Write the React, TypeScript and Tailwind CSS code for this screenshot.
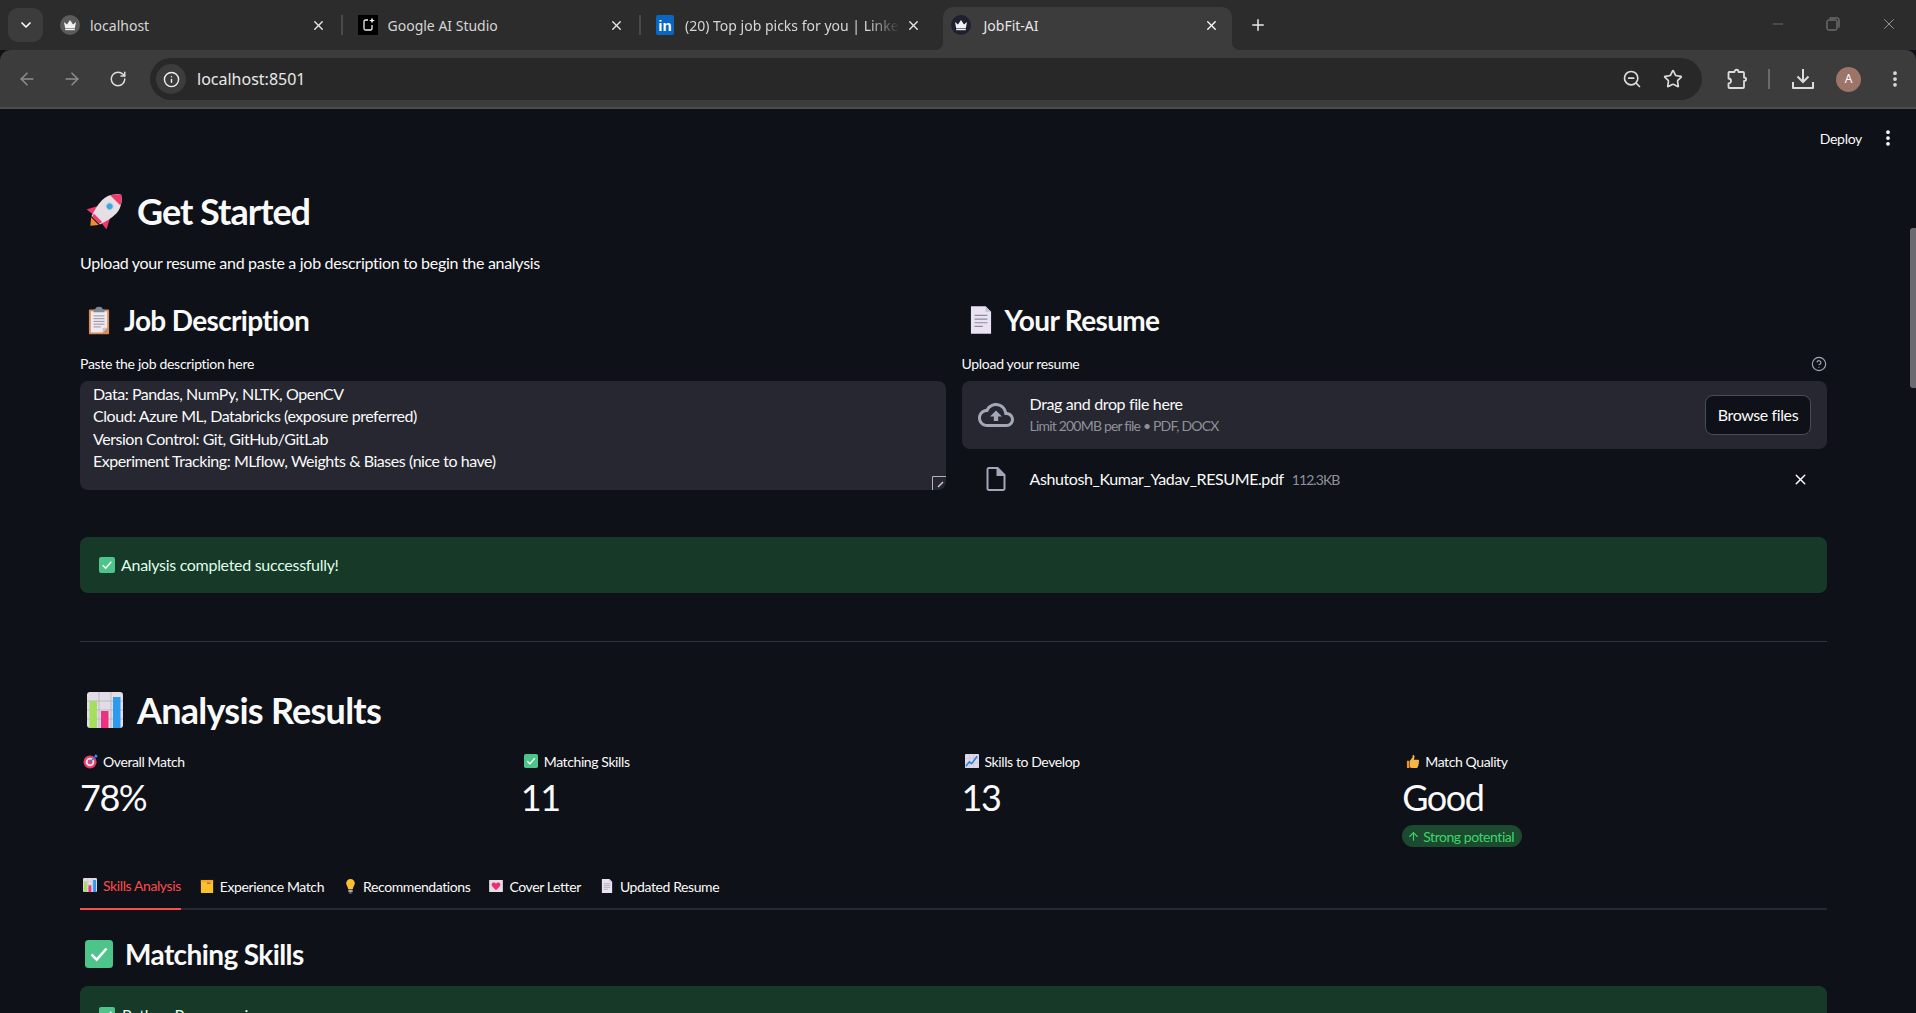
import React from 'react';
import {
  ArrowLeft,
  ArrowRight,
  ChevronDown,
  EllipsisVertical,
  Info,
  Minus,
  Plus,
  RotateCw,
  Star,
  X,
  ZoomOut,
  CircleHelp,
  ArrowUp,
} from 'lucide-react';

type IconProps = { className?: string };

const Crown = ({ bg }: { bg: string }) => (
  <svg viewBox="0 0 20 20" className="h-[20px] w-[20px] shrink-0">
    <circle cx="10" cy="10" r="10" fill={bg} />
    <path d="M4 7l3 2.6L10 5l3 4.6L16 7l-1.2 6.2H5.2z" fill="#f2f2f2" />
    <rect x="5.2" y="13.8" width="9.6" height="1.4" fill="#f2f2f2" />
  </svg>
);

const AiStudioIcon = () => (
  <svg viewBox="0 0 20 20" className="h-[20px] w-[20px] shrink-0">
    <rect width="20" height="20" fill="#000" />
    <path d="M10 5H7.5A1.5 1.5 0 0 0 6 6.5v7A1.5 1.5 0 0 0 7.5 15h5a1.5 1.5 0 0 0 1.5-1.5V10" fill="none" stroke="#eee" strokeWidth="1.3" />
    <path d="M14 2.5l.8 2.2 2.2.8-2.2.8-.8 2.2-.8-2.2-2.2-.8 2.2-.8z" fill="#fff" />
  </svg>
);

const RocketEmoji = ({ className }: IconProps) => (
  <svg viewBox="1.5 1.5 33 33" className={className}>
    <g transform="rotate(45 18 18)">
      <path d="M13 31l5 6 5-6z" fill="#f28a2e" />
      <path d="M11 18L5 29l8-1zM25 18l6 11-8-1z" fill="#f0386b" />
      <path d="M18-3c6 4 9 10 9 16 0 6-2 12-3.500 17h-11C11 25 9 19 9 13 9 7 12 1 18-3z" fill="#e6dfe4" />
      <path d="M18-3c3 2 5 4.500 6.500 7.500h-13C13 1.500 15-1 18-3z" fill="#f0386b" />
      <path d="M13.500 30h9l.8-3H12.700z" fill="#f0386b" />
      <circle cx="18" cy="12" r="3.8" fill="#c9d4de" />
      <circle cx="18" cy="12" r="2.7" fill="#3ea6e8" />
    </g>
  </svg>
);

const ClipboardEmoji = ({ className }: IconProps) => (
  <svg viewBox="0 0 24 30" className={className}>
    <rect x="1" y="3" width="22" height="27" rx="1" fill="#d98a55" />
    <path d="M3 5h18v18l-5 5H3z" fill="#eeeaf0" />
    <path d="M16 28l5-5h-5z" fill="#c9c2cc" />
    <path d="M8 3a4 3 0 0 1 8 0h2v3H6V3z" fill="#7e8a94" />
    <path d="M6 10h12M6 13h12M6 16h12M6 19h12M6 22h8" stroke="#8f8a94" strokeWidth="1" />
  </svg>
);

const PageEmoji = ({ className }: IconProps) => (
  <svg viewBox="0 0 24 30" className={className}>
    <path d="M1 0h16l6 6v24H1z" fill="#e9e2f2" />
    <path d="M17 0l6 6h-6z" fill="#c5bdd0" />
    <path d="M5 10h14M5 14h14M5 18h14M5 22h9" stroke="#8f8a9c" strokeWidth="1.2" />
  </svg>
);

const CheckEmoji = ({ className }: IconProps) => (
  <svg viewBox="0 0 28 28" className={className}>
    <rect width="28" height="28" rx="3.5" fill="#4cc48a" />
    <path d="M6.5 14.5l5.2 5.200L21.500 8.500" fill="none" stroke="#fff" strokeWidth="2.6" />
  </svg>
);

const BarsEmoji = ({ className }: IconProps) => (
  <svg viewBox="0 0 36 36" className={className}>
    <rect width="36" height="36" rx="3" fill="#e1dce6" />
    <path d="M12 0v36M24 0v36M0 9h36M0 18h36M0 27h36" stroke="#bdb8c4" strokeWidth="1" />
    <rect x="2.5" y="9" width="7.5" height="27" fill="#a4e05c" />
    <rect x="14" y="19" width="7.5" height="17" fill="#ef2f80" />
    <rect x="26" y="5" width="7.5" height="31" fill="#2a9bf0" />
  </svg>
);

const TargetEmoji = ({ className }: IconProps) => (
  <svg viewBox="0 0 16 16" className={className}>
    <circle cx="7.5" cy="8.5" r="7" fill="#ef3a6e" />
    <circle cx="7.5" cy="8.5" r="4.6" fill="#f3e6ea" />
    <circle cx="7.5" cy="8.5" r="2.6" fill="#ef3a6e" />
    <path d="M7.5 8.5L14 2" stroke="#2f7fd6" strokeWidth="1.5" />
    <path d="M12 2l2-2 .5 1.500L16 2l-2 2z" fill="#2f9bf0" />
  </svg>
);

const TrendEmoji = ({ className }: IconProps) => (
  <svg viewBox="0 0 16 16" className={className}>
    <rect width="16" height="16" rx="1" fill="#ded8e8" />
    <path d="M5 0v16M10 0v16M0 5h16M0 10h16" stroke="#c4bed0" strokeWidth="0.6" />
    <path d="M1 14l4-5 2.500 2L14 2.500" fill="none" stroke="#1f7fe0" strokeWidth="1.7" />
  </svg>
);

const ThumbEmoji = ({ className }: IconProps) => (
  <svg viewBox="0 0 16 16" className={className}>
    <path d="M1 7h3v8.500H2a1 1 0 0 1-1-1z" fill="#f28f2c" />
    <path d="M4.500 7.200L7.500 3V1c0-.8 2.300-1 2.300 1.400L9 6h4.600c1.800 0 1.800 2.400.6 2.700 1 .6.800 2.200-.2 2.500.6.800.3 2.100-.6 2.400.2 1-.5 1.900-1.400 1.900H6.500l-2-.8z" fill="#f9b544" />
  </svg>
);

const NotebookEmoji = ({ className }: IconProps) => (
  <svg viewBox="0 0 16 16" className={className}>
    <rect x="1" y="1" width="14" height="14.5" rx="1" fill="#fbc02d" />
    <rect x="1" y="0.5" width="14" height="2.5" fill="#f5a623" />
    <rect x="8" y="3.5" width="4" height="1.5" fill="#e0483e" />
  </svg>
);

const BulbEmoji = ({ className }: IconProps) => (
  <svg viewBox="0 0 12 18" className={className}>
    <path d="M6 0a5.200 5.200 0 0 1 5.200 5.200c0 2.400-1.900 3.600-2.400 6.800H3.200C2.700 8.800.8 7.600.8 5.200A5.200 5.200 0 0 1 6 0z" fill="#fbc02d" />
    <rect x="3.4" y="12.5" width="5.2" height="3.5" rx="0.8" fill="#a9a4ae" />
    <rect x="4.5" y="16" width="3" height="1.6" rx="0.7" fill="#6f6a76" />
  </svg>
);

const LetterEmoji = ({ className }: IconProps) => (
  <svg viewBox="0 0 16 14" className={className}>
    <rect width="16" height="14" fill="#e6dcea" />
    <path d="M8 12L3.500 7.300C2 5.500 3.400 3 5.500 3 6.700 3 7.600 3.700 8 4.500 8.400 3.700 9.300 3 10.500 3c2.100 0 3.500 2.500 2 4.300z" fill="#ee2f6c" />
  </svg>
);

const CloudUpload = ({ className }: IconProps) => (
  <svg viewBox="0 0 24 24" fill="currentColor" className={className}>
    <path d="M19.35 10.04C18.67 6.59 15.64 4 12 4 9.110 4 6.600 5.640 5.350 8.040 2.340 8.360 0 10.910 0 14c0 3.310 2.690 6 6 6h13c2.760 0 5-2.240 5-5 0-2.640-2.050-4.780-4.650-4.960zM19 18H6c-2.210 0-4-1.790-4-4 0-2.050 1.530-3.760 3.560-3.970l1.070-.11.5-.95C8.080 7.140 9.940 6 12 6c2.620 0 4.880 1.860 5.390 4.430l.3 1.500 1.530.11c1.560.1 2.780 1.410 2.780 2.960 0 1.650-1.350 3-3 3zM8 13h2.550v3h2.900v-3H16l-4-4z" />
  </svg>
);

const FileIcon = ({ className }: IconProps) => (
  <svg viewBox="0 0 20 24" fill="currentColor" className={className}>
    <path d="M12 0H3C1.500 0 .5 1 .5 2.500v19C.5 23 1.500 24 3 24h14c1.500 0 2.500-1 2.500-2.500V7.500zM2.500 22V2h8v7h7v13z" />
  </svg>
);

const ExtensionIcon = () => (
  <svg viewBox="0 0 22 22" className="h-[22px] w-[22px]" fill="none" stroke="#dcdcdc" strokeWidth="1.8" strokeLinejoin="round">
    <path d="M3 4h5.500c0-3 4-3 4 0H17a1 1 0 0 1 1 1v4.500c2.800 0 2.800 3.500 0 3.500v6a1 1 0 0 1-1 1H3.500a1 1 0 0 1-1-1v-3.500c3.400 0 3.400-5 0-5V5a1 1 0 0 1 .5-1z" />
  </svg>
);

const DownloadIcon = () => (
  <svg viewBox="0 0 22 22" className="h-[22px] w-[22px]" fill="none" stroke="#dcdcdc" strokeWidth="2">
    <path d="M11 1v13M5.500 8.500L11 14l5.500-5.500" />
    <path d="M1 14v6h20v-6" strokeLinejoin="round" />
  </svg>
);

const RestoreIcon = () => (
  <svg viewBox="0 0 14 14" className="h-[14px] w-[14px]" fill="none" stroke="#8a8a8a" strokeWidth="1">
    <rect x="1" y="3" width="10" height="10" rx="1.5" />
    <path d="M3.500 1h8A1.500 1.500 0 0 1 13 2.500v8" />
  </svg>
);

const tabs = [
  { title: 'localhost', icon: <Crown bg="#5b5b5b" /> },
  { title: 'Google AI Studio', icon: <AiStudioIcon /> },
  {
    title: '(20) Top job picks for you | LinkedIn',
    fade: true,
    icon: (
      <span className="flex h-[20px] w-[18px] shrink-0 items-center justify-center rounded-[2px] bg-[#0a66c2] font-['Liberation_Sans',sans-serif] text-[15px] leading-none font-bold text-white">
        in
      </span>
    ),
  },
];

const TabStrip = () => (
  <div className="flex h-[50px] shrink-0 items-end bg-[#2c2c2c] font-['Noto_Sans',sans-serif] text-[14px] text-[#d6d6d6]">
    <div className="mb-[8px] ml-[8px] flex h-[34px] w-[35px] items-center justify-center rounded-[10px] bg-[#3c3c3c]">
      <ChevronDown className="h-[16px] w-[16px] text-white" strokeWidth={2.5} />
    </div>
    <div className="ml-[3px] flex h-full">
      {tabs.map((tab, idx) => (
        <div key={idx} className="flex h-full w-[297.5px] items-center pl-[14px]">
          <span className="flex w-[20px] justify-center">{tab.icon}</span>
          <span className={`ml-[10px] w-[215px] overflow-hidden whitespace-nowrap ${tab.fade ? '[mask-image:linear-gradient(to_right,black_85%,transparent)]' : ''}`}>
            {tab.title}
          </span>
          <X className="ml-[6px] h-[15px] w-[15px] text-[#e8e8e8]" strokeWidth={2.2} />
          {idx < 2 && <span className="ml-[15px] h-[20px] w-[2px] bg-[#4a4a4a]" />}
        </div>
      ))}
      <div className="relative mt-[7px] ml-[4px] flex h-[43px] w-[289px] items-center rounded-t-[10px] bg-[#3c3c3c] pb-[7px] pl-[8px] text-[#e6e6e6]">
        <span className="absolute bottom-0 left-[-8px] h-[8px] w-[8px] bg-[radial-gradient(circle_at_0_0,transparent_8px,#3c3c3c_8.5px)]" />
        <span className="absolute right-[-8px] bottom-0 h-[8px] w-[8px] bg-[radial-gradient(circle_at_100%_0,transparent_8px,#3c3c3c_8.5px)]" />
        <Crown bg="#1e2030" />
        <span className="ml-[13px] w-[220px]">JobFit-AI</span>
        <X className="h-[15px] w-[15px] text-white" strokeWidth={2.2} />
      </div>
      <Plus className="mt-[16px] ml-[17px] h-[18px] w-[18px] text-[#e8e8e8]" strokeWidth={2} />
    </div>
    <div className="ml-auto flex h-full items-center gap-[40px] pr-[18px] pb-[2px]">
      <Minus className="h-[16px] w-[16px] text-[#8a8a8a]" strokeWidth={1} />
      <RestoreIcon />
      <X className="h-[18px] w-[18px] text-[#b8b8b8]" strokeWidth={1} />
    </div>
  </div>
);

const Toolbar = () => (
  <div className="flex h-[59px] shrink-0 items-center rounded-t-[10px] border-b-[2px] border-[#4d4d4d] bg-[#3c3c3c] pt-[1px] font-['Noto_Sans',sans-serif]">
    <ArrowLeft className="ml-[17px] h-[20px] w-[20px] text-[#8e8e8e]" strokeWidth={1.8} />
    <ArrowRight className="ml-[25px] h-[20px] w-[20px] text-[#8e8e8e]" strokeWidth={1.8} />
    <RotateCw className="ml-[27px] h-[18px] w-[18px] text-[#dedede]" strokeWidth={2} />
    <div className="ml-[23px] flex h-[42px] w-[1552px] items-center rounded-full bg-[#282828] pr-[19px] pl-[6px]">
      <span className="flex h-[30px] w-[30px] items-center justify-center rounded-full bg-[#3c3c3c]">
        <Info className="h-[17px] w-[17px] text-[#eeeeee]" strokeWidth={2} />
      </span>
      <span className="ml-[11px] text-[16px] text-[#e8e8e8]">localhost:8501</span>
      <ZoomOut className="ml-auto h-[20px] w-[20px] text-[#dcdcdc]" strokeWidth={2} />
      <Star className="ml-[21px] h-[20px] w-[20px] text-[#dcdcdc]" strokeWidth={2} />
    </div>
    <span className="ml-[24px]">
      <ExtensionIcon />
    </span>
    <span className="ml-[20px] h-[20px] w-[2px] bg-[#6a6a6a]" />
    <span className="ml-[22px]">
      <DownloadIcon />
    </span>
    <span className="ml-[22px] flex h-[25px] w-[25px] items-center justify-center rounded-full bg-[#9c7468] text-[12px] text-white">
      A
    </span>
    <EllipsisVertical className="ml-[24px] h-[20px] w-[20px] text-[#dcdcdc]" strokeWidth={2.5} />
  </div>
);

const metrics = [
  { label: 'Overall Match', value: '78%', icon: <TargetEmoji className="h-[15px] w-[15px]" /> },
  { label: 'Matching Skills', value: '11', icon: <CheckEmoji className="h-[14px] w-[14px]" /> },
  { label: 'Skills to Develop', value: '13', icon: <TrendEmoji className="h-[14px] w-[14px]" /> },
  { label: 'Match Quality', value: 'Good', badge: 'Strong potential', icon: <ThumbEmoji className="h-[15px] w-[14px]" /> },
];

const resultTabs = [
  { label: 'Skills Analysis', icon: <BarsEmoji className="h-[14px] w-[14px]" /> },
  { label: 'Experience Match', icon: <NotebookEmoji className="h-[15px] w-[15px]" /> },
  { label: 'Recommendations', icon: <BulbEmoji className="h-[15px] w-[11px]" /> },
  { label: 'Cover Letter', icon: <LetterEmoji className="h-[12px] w-[14px]" /> },
  { label: 'Updated Resume', icon: <PageEmoji className="h-[14px] w-[12px]" /> },
];

const jobLines = [
  'Data: Pandas, NumPy, NLTK, OpenCV',
  'Cloud: Azure ML, Databricks (exposure preferred)',
  'Version Control: Git, GitHub/GitLab',
  'Experiment Tracking: MLflow, Weights & Biases (nice to have)',
];

const App: React.FC = () => {
  return (
    <div className="flex h-screen w-full flex-col overflow-hidden bg-[#0e1117]">
      <TabStrip />
      <Toolbar />

      <main className="relative min-h-0 flex-1 overflow-hidden font-['Lato',sans-serif] tracking-[-0.3px] text-[#fafafa]">
        {/* scrollbar */}
        <div className="absolute top-[119px] right-0 h-[160px] w-[6px] rounded-l-[3px] bg-[#6b6b6f]" />

        {/* header */}
        <div className="flex h-[58px] items-center justify-end pr-[18px] text-[14px]">
          <span>Deploy</span>
          <EllipsisVertical className="ml-[16px] h-[20px] w-[20px] text-white" strokeWidth={2.5} />
        </div>

        <div className="pr-[89px] pl-[80px]">
          <h1 className="mt-[22px] flex h-[44px] items-center text-[36px] font-bold tracking-[-1px]">
            <RocketEmoji className="ml-[7px] h-[36px] w-[36px]" />
            <span className="ml-[14px]">Get Started</span>
          </h1>
          <p className="mt-[18px] h-[24px] text-[16px] leading-[24px]">
            Upload your resume and paste a job description to begin the analysis
          </p>

          <div className="mt-[25px] grid grid-cols-2 gap-[16px]">
            <div>
              <h2 className="flex h-[40px] items-center text-[28px] font-bold tracking-[-0.65px]">
                <ClipboardEmoji className="ml-[8px] h-[29px] w-[22px]" />
                <span className="ml-[14px]">Job Description</span>
              </h2>
              <div className="mt-[15px] h-[18px] text-[14px] leading-[18px]">Paste the job description here</div>
              <div className="relative mt-[8px] h-[109px] rounded-[8px] bg-[#262730] px-[13px] pt-[2px] text-[16px] leading-[22.4px] tracking-[-0.45px]">
                {jobLines.map((line) => (
                  <div key={line}>{line}</div>
                ))}
                <svg viewBox="0 0 14 14" className="absolute right-0 bottom-0 h-[14px] w-[14px]">
                  <path d="M.5 14V.5H14" fill="none" stroke="#b5b5b5" strokeWidth="1" />
                  <path d="M6 11l5-5" stroke="#d0d0d0" strokeWidth="1.5" />
                </svg>
              </div>
            </div>

            <div>
              <h2 className="flex h-[40px] items-center text-[28px] font-bold tracking-[-0.65px]">
                <PageEmoji className="ml-[8px] h-[28px] w-[22px]" />
                <span className="ml-[13px]">Your Resume</span>
              </h2>
              <div className="mt-[15px] flex h-[18px] items-center justify-between text-[14px] leading-[18px]">
                <span>Upload your resume</span>
                <CircleHelp className="h-[16px] w-[16px] text-[#a3a8b8]" strokeWidth={1.7} />
              </div>
              <div className="mt-[8px] flex h-[68px] items-center rounded-[8px] bg-[#262730] px-[16px]">
                <CloudUpload className="h-[36px] w-[36px] text-[#a3a8b8]" />
                <div className="mb-[2px] ml-[16px]">
                  <div className="text-[16px] leading-[23px] tracking-[-0.37px]">Drag and drop file here</div>
                  <div className="text-[14px] leading-[21px] tracking-[-0.8px] text-[#8f919a]">Limit 200MB per file • PDF, DOCX</div>
                </div>
                <button className="ml-auto h-[40px] w-[106px] rounded-[8px] border border-[#4a4c57] bg-[#0e1117] text-[16px] tracking-[-0.4px] text-[#fafafa]">
                  Browse files
                </button>
              </div>
              <div className="mt-[19px] flex h-[22px] items-center">
                <FileIcon className="ml-[24px] h-[24px] w-[20px] text-[#a3a8b8]" />
                <span className="ml-[24px] text-[16px] tracking-[-0.4px]">Ashutosh_Kumar_Yadav_RESUME.pdf</span>
                <span className="ml-[8px] text-[14px] tracking-[-0.9px] text-[#8f919a]">112.3KB</span>
                <X className="mr-[18px] ml-auto h-[17px] w-[17px] text-white" strokeWidth={2} />
              </div>
            </div>
          </div>

          <div className="mt-[47px] flex h-[56px] items-center rounded-[8px] bg-[#173928] pl-[19px] text-[16px] text-[#dffde9]">
            <CheckEmoji className="h-[16px] w-[16px]" />
            <span className="ml-[6px]">Analysis completed successfully!</span>
          </div>

          <div className="mt-[48px] h-[1px] bg-[#31333f]" />

          <h1 className="mt-[46px] flex h-[44px] items-center text-[36px] font-bold tracking-[-0.75px]">
            <BarsEmoji className="ml-[7px] h-[36px] w-[36px]" />
            <span className="ml-[14px]">Analysis Results</span>
          </h1>

          <div className="mt-[19px] grid grid-cols-4 gap-[16px]">
            {metrics.map((metric) => (
              <div key={metric.label}>
                <div className="flex h-[20px] items-center text-[14px] tracking-[-0.4px]">
                  <span className="ml-[3px] flex w-[15px] justify-center">{metric.icon}</span>
                  <span className="ml-[5px]">{metric.label}</span>
                </div>
                <div className="mt-[6px] h-[40px] text-[36px] leading-[40px] tracking-[-1.5px]">{metric.value}</div>
                {metric.badge && (
                  <div className="mt-[8px] flex h-[22px] w-[120px] items-center rounded-full bg-[#1c4a2e] pl-[5px] text-[14px] tracking-[-0.45px] text-[#3dd56d]">
                    <ArrowUp className="h-[13px] w-[13px]" strokeWidth={2} />
                    <span className="ml-[3px]">{metric.badge}</span>
                  </div>
                )}
              </div>
            ))}
          </div>

          <div className="mt-[18px] flex h-[45px] gap-[16px] border-b-[2px] border-[#262730] text-[14px] tracking-[-0.4px]">
            {resultTabs.map((tab, idx) => (
              <div
                key={tab.label}
                className={`flex h-[45px] items-center pb-[3px] ${idx === 0 ? 'border-b-[2px] border-[#ff4b4b] text-[#ff4b4b]' : ''}`}
              >
                <span className="ml-[3px] flex w-[14px] justify-center">{tab.icon}</span>
                <span className="ml-[6px]">{tab.label}</span>
              </div>
            ))}
          </div>

          <h2 className="mt-[24px] flex h-[40px] items-center text-[28px] font-bold tracking-[-0.6px]">
            <CheckEmoji className="ml-[5px] h-[28px] w-[28px]" />
            <span className="ml-[12px]">Matching Skills</span>
          </h2>

          <div className="mt-[12px] flex h-[56px] items-start rounded-[8px] bg-[#173928] pt-[17px] pl-[19px] text-[16px] text-[#dffde9]">
            <CheckEmoji className="mt-[4px] h-[16px] w-[16px]" />
            <span className="ml-[7px]">Python Programming</span>
          </div>
        </div>
      </main>
    </div>
  );
};

export default App;
